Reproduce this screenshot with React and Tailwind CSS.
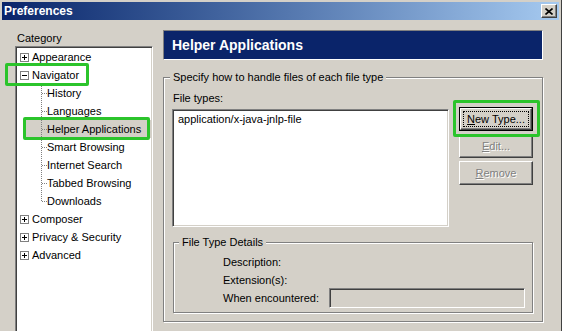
import React from 'react'

const sunken =
  'border border-[#808080] border-b-white border-r-white shadow-[inset_1px_1px_#404040,inset_-1px_-1px_#d4d0c8]'
const raised =
  'border border-t-white border-l-white border-r-[#404040] border-b-[#404040] shadow-[inset_-1px_-1px_#808080] bg-[#d4d0c8]'
const etched = 'border border-[#808080] shadow-[inset_1px_1px_white,1px_1px_white]'

function Expander({ open }) {
  return (
    <svg width="9" height="9" viewBox="0 0 9 9" className="shrink-0">
      <rect x="0.5" y="0.5" width="8" height="8" fill="white" stroke="#808080" />
      <line x1="2" y1="4.5" x2="7" y2="4.5" stroke="black" />
      {!open && <line x1="4.5" y1="2" x2="4.5" y2="7" stroke="black" />}
    </svg>
  )
}

function Branch({ last }) {
  return (
    <svg width="6" height="18" viewBox="0 0 6 18" className="shrink-0">
      <line x1="0.5" y1="0" x2="0.5" y2={last ? 9 : 18} stroke="#808080" strokeDasharray="1 1" />
      <line x1="1" y1="9.5" x2="6" y2="9.5" stroke="#808080" strokeDasharray="1 1" />
    </svg>
  )
}

function TopItem({ label, open }) {
  return (
    <div className="flex h-[18px] items-center pl-[4px]">
      <Expander open={open} />
      <span className="ml-[3px] whitespace-nowrap">{label}</span>
    </div>
  )
}

function ChildItem({ label, last, selected }) {
  if (selected) {
    return (
      <div className="flex h-[18px]">
        <div className="w-[10px] shrink-0" />
        <div className="flex flex-1 items-center bg-[#d4d0c8] pl-[15px]">
          <Branch last={last} />
          <span className="whitespace-nowrap">{label}</span>
        </div>
      </div>
    )
  }
  return (
    <div className="flex h-[18px] items-center pl-[25px]">
      <Branch last={last} />
      <span className="whitespace-nowrap">{label}</span>
    </div>
  )
}

function Button({ children, disabled, isDefault }) {
  const text = disabled ? 'text-[#808080] [text-shadow:1px_1px_0_white]' : 'text-black'
  if (isDefault) {
    return (
      <div className="h-[24px] border border-black">
        <div className={`flex h-full items-center justify-center p-[2px] ${raised}`}>
          <div className={`flex h-full w-full items-center justify-center border border-dotted border-black ${text}`}>
            {children}
          </div>
        </div>
      </div>
    )
  }
  return <div className={`flex h-[24px] items-center justify-center ${raised} ${text}`}>{children}</div>
}

export default function App() {
  return (
    <div className="relative h-[331px] w-[562px] overflow-hidden border-r border-r-[#404040] bg-[#d4d0c8] pl-[2px] pr-[2px] pt-[2px] font-['Liberation_Sans',Arial,sans-serif] text-[11px] text-black">
      {/* title bar */}
      <div className="flex h-[18px] items-center justify-between bg-linear-to-r from-[#0a246a] to-[#a6caf0] pl-[2px] pr-[2px]">
        <span className="text-[12px] font-bold text-white">Preferences</span>
        <div className={`flex h-[14px] w-[16px] items-center justify-center ${raised}`}>
          <svg width="8" height="7" viewBox="0 0 8 7">
            <path d="M0.5 0.5 L7.5 6.5 M7.5 0.5 L0.5 6.5" stroke="black" strokeWidth="1.6" />
          </svg>
        </div>
      </div>

      <div className="flex pl-[13px]">
        {/* category tree */}
        <div className="w-[138px] shrink-0 pt-[11px]">
          <div className="h-[15px] pl-[2px] leading-[15px]">Category</div>
          <div className={`h-[300px] bg-white pt-[1px] ${sunken}`}>
            <TopItem label="Appearance" />
            <TopItem label="Navigator" open />
            <ChildItem label="History" />
            <ChildItem label="Languages" />
            <ChildItem label="Helper Applications" selected />
            <ChildItem label="Smart Browsing" />
            <ChildItem label="Internet Search" />
            <ChildItem label="Tabbed Browsing" />
            <ChildItem label="Downloads" last />
            <TopItem label="Composer" />
            <TopItem label="Privacy & Security" />
            <TopItem label="Advanced" />
          </div>
        </div>

        {/* panel */}
        <div className="ml-[10px] w-[380px] shrink-0 pt-[10px]">
          <div className="flex h-[30px] items-center border border-[#808080] border-b-white border-r-white bg-[#0a246a] pl-[8px] text-[14px] font-bold text-white">
            Helper Applications
          </div>

          <fieldset className={`mt-[10px] pb-[8px] pl-[8px] pr-[8px] ${etched}`}>
            <legend className="-ml-[2px] bg-[#d4d0c8] px-[3px] leading-[14px]">
              Specify how to handle files of each file type
            </legend>
            <div className="flex pt-[7px]">
              <div className="w-[277px] shrink-0">
                <div className="h-[14px] pl-[1px] leading-[14px]">File types:</div>
                <div className={`mt-[4px] h-[118px] bg-white pl-[5px] pt-[2px] leading-[14px] ${sunken}`}>
                  application/x-java-jnlp-file
                </div>
              </div>
              <div className="ml-[10px] flex w-[74px] shrink-0 flex-col gap-[3px] pt-[16px]">
                <Button isDefault>
                  <span><u>N</u>ew Type...</span>
                </Button>
                <Button disabled>
                  <span><u>E</u>dit...</span>
                </Button>
                <Button disabled>
                  <span><u>R</u>emove</span>
                </Button>
              </div>
            </div>

            <fieldset className={`ml-[1px] mt-[9px] w-[360px] pb-[4px] pl-[7px] ${etched}`}>
              <legend className="-ml-[2px] bg-[#d4d0c8] px-[3px] leading-[13px]">File Type Details</legend>
              <div className="pl-[42px] pt-[4px]">
                <div className="h-[18px] leading-[18px]">Description:</div>
                <div className="h-[18px] leading-[18px]">Extension(s):</div>
                <div className="-mt-[1px] flex h-[20px] items-center">
                  <span className="w-[106px] shrink-0">When encountered:</span>
                  <div className={`h-[20px] w-[196px] bg-[#d4d0c8] ${sunken}`} />
                </div>
              </div>
            </fieldset>
          </fieldset>
        </div>
      </div>

      {/* annotation highlights */}
      <div className="absolute left-[5px] top-[63px] h-[23px] w-[84px] rounded-[2px] border-[3px] border-[#2bc42b]" />
      <div className="absolute left-[23px] top-[117px] h-[23px] w-[127px] rounded-[2px] border-[3px] border-[#2bc42b]" />
      <div className="absolute left-[453px] top-[100px] h-[37px] w-[87px] rounded-[2px] border-[3px] border-[#2bc42b]" />
    </div>
  )
}
